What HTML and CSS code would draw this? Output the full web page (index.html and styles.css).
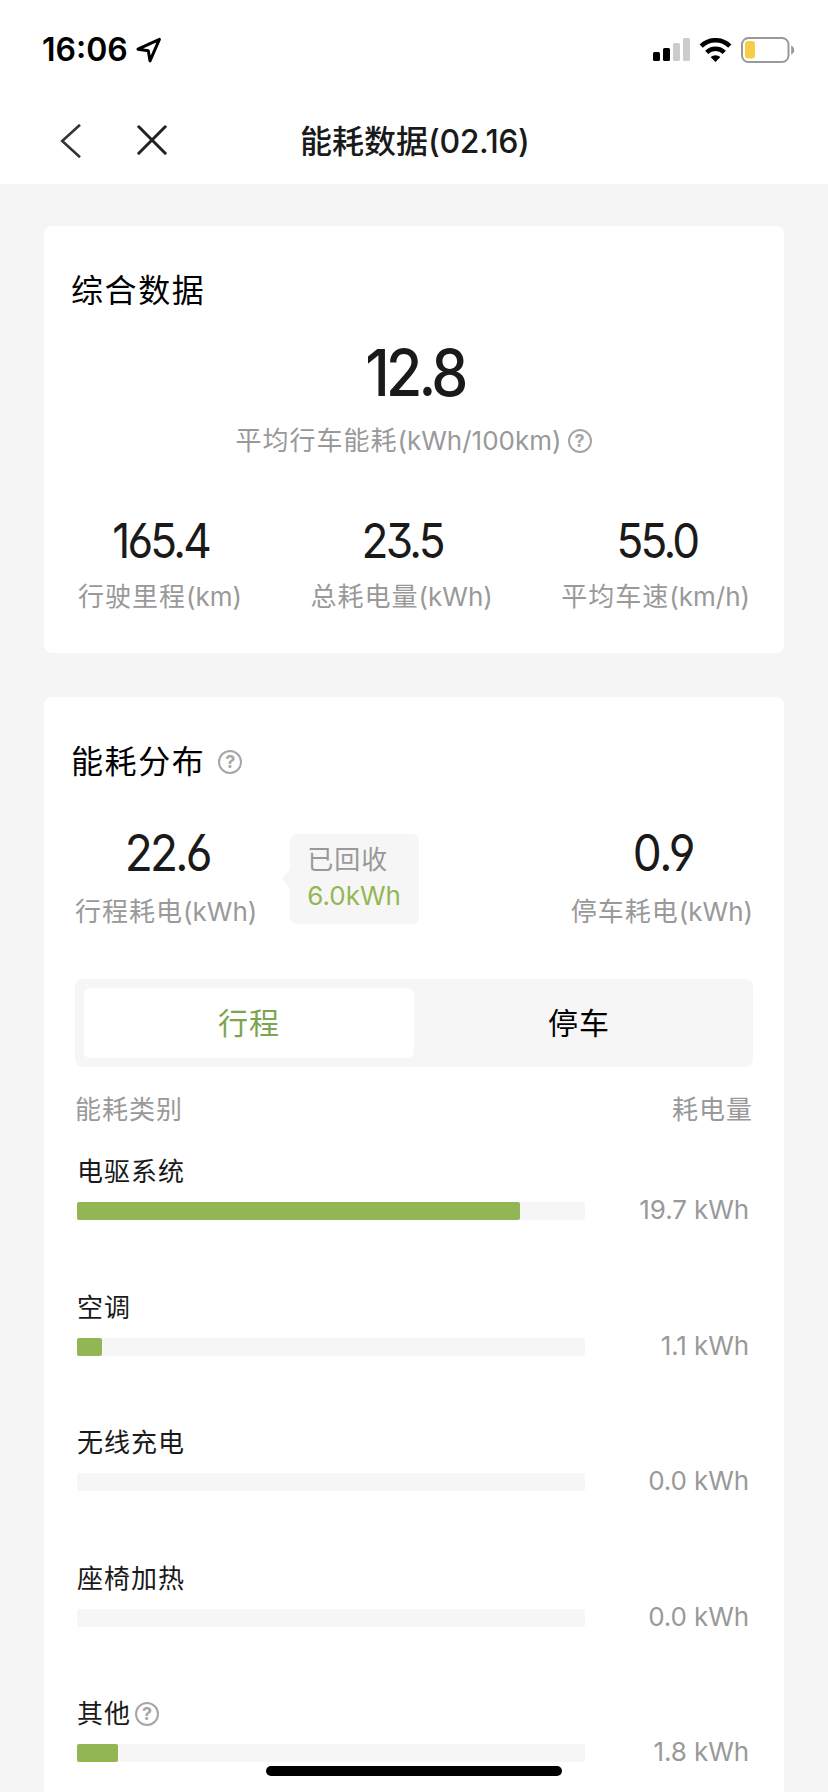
FILE: index.html
```html
<!DOCTYPE html>
<html lang="zh-CN">
<head>
<meta charset="utf-8">
<title>能耗数据</title>
<link rel="stylesheet" href="styles.css">
</head>
<body>
<div class="screen">
  <header class="top">
    <div class="status">
      <span class="time">16:06</span>
      <svg class="locate" width="26" height="26" viewBox="0 0 26 26"><path d="M2 12.2 L23.4 2.4 L14 23.8 L12.3 13.7 Z" fill="none" stroke="#000" stroke-width="3" stroke-linejoin="round"/></svg>
      <svg class="signal" width="37" height="23" viewBox="0 0 37 23"><rect y="14" width="7" height="9" rx="1.5"/><rect x="10" y="10" width="7" height="13" rx="1.5"/><rect x="20" y="5" width="7" height="18" rx="1.5" fill="#ccc"/><rect x="30" width="7" height="23" rx="1.5" fill="#ccc"/></svg>
      <svg class="wifi" width="33" height="24" viewBox="0 0 33 24"><path d="M2.2 8.1 A20.4 20.4 0 0 1 30.8 8.1" fill="none" stroke="#000" stroke-width="4.6"/><path d="M7.7 14.4 A12.3 12.3 0 0 1 25.3 14.4" fill="none" stroke="#000" stroke-width="4.4"/><path d="M16.5 24 L11.6 19 Q16.5 15.4 21.4 19 Z"/></svg>
      <svg class="battery" width="54" height="26" viewBox="0 0 54 26"><rect x="1" y="1" width="46.5" height="24" rx="6.5" fill="none" stroke="#999" stroke-width="2"/><rect x="4" y="4" width="10" height="17.5" rx="3" fill="#f5ce46"/><path d="M50.2 8.5 Q53.2 10 53.2 13 Q53.2 16 50.2 17.5Z" fill="#999"/></svg>
    </div>
    <nav class="nav">
      <svg class="back" width="22" height="34" viewBox="0 0 22 34"><path d="M20 .8 L2.2 17 L20 33.2" fill="none" stroke="#333" stroke-width="2.6"/></svg>
      <svg class="close" width="30" height="30" viewBox="0 0 30 30"><path d="M1.8 1.8 L28.2 28.2 M28.2 1.8 L1.8 28.2" fill="none" stroke="#222" stroke-width="3" stroke-linecap="round"/></svg>
      <h1 class="nav-title">能耗数据<span class="nav-date">(02.16)</span></h1>
    </nav>
  </header>

  <main class="content">
    <section class="card summary">
      <h2 class="card-title">综合数据</h2>
      <div class="hero">12.8</div>
      <div class="hero-label label">平均行车能耗<span class="latin">(kWh/100km)</span><span class="help">?</span></div>
      <div class="stats">
        <div class="stat"><div class="num">165.4</div><div class="label">行驶里程<span class="latin">(km)</span></div></div>
        <div class="stat"><div class="num">23.5</div><div class="label">总耗电量<span class="latin">(kWh)</span></div></div>
        <div class="stat"><div class="num">55.0</div><div class="label">平均车速<span class="latin">(km/h)</span></div></div>
      </div>
    </section>

    <section class="card split">
      <h2 class="card-title">能耗分布<span class="help">?</span></h2>
      <div class="usage">
        <div class="stat"><div class="num">22.6</div><div class="label">行程耗电<span class="latin">(kWh)</span></div></div>
        <div class="recovered"><div>已回收</div><div class="recovered-value">6.0kWh</div></div>
        <div class="stat parked"><div class="num">0.9</div><div class="label">停车耗电<span class="latin">(kWh)</span></div></div>
      </div>
      <div class="tabs"><div class="tab active">行程</div><div class="tab">停车</div></div>
      <div class="table-head"><span>能耗类别</span><span>耗电量</span></div>
      <div class="row"><div class="name">电驱系统</div><div class="meter"><div class="track"><div class="fill" style="width:443px"></div></div><span class="value">19.7 kWh</span></div></div>
      <div class="row"><div class="name">空调</div><div class="meter"><div class="track"><div class="fill" style="width:25px"></div></div><span class="value">1.1 kWh</span></div></div>
      <div class="row"><div class="name">无线充电</div><div class="meter"><div class="track"></div><span class="value">0.0 kWh</span></div></div>
      <div class="row"><div class="name">座椅加热</div><div class="meter"><div class="track"></div><span class="value">0.0 kWh</span></div></div>
      <div class="row"><div class="name">其他<span class="help">?</span></div><div class="meter"><div class="track"><div class="fill" style="width:41px"></div></div><span class="value">1.8 kWh</span></div></div>
    </section>
  </main>
  <div class="home-indicator"></div>
</div>
</body>
</html>
```
FILE: styles.css
```css
* { box-sizing: border-box; }
body { margin: 0; background: #f5f5f5; font-family: Inter, "Noto Sans CJK SC", sans-serif; color: #1a1a1a; }
h1, h2 { margin: 0; font-weight: 400; }
svg { display: block; flex: none; }
.screen { position: relative; width: 828px; height: 1792px; overflow: hidden; }
.top { height: 184px; background: #fff; }
.status { display: flex; align-items: center; height: 98px; padding: 1px 33px 0 42px; }
.time { font-size: 32px; font-weight: 600; line-height: 40px; width: 94px; padding-top: 1px; color: #000; white-space: nowrap; }
.locate { margin-right: auto; margin-top: 1px; }
.signal { margin-right: 9px; }
.wifi { margin-right: 9px; }
.nav { display: flex; align-items: center; height: 86px; padding-left: 60px; }
.close { margin-left: 55px; margin-bottom: 2px; }
.back { margin-bottom: 1px; }
.nav-title { margin-left: 133px; font-size: 32px; font-weight: 500; line-height: 44px; padding-top: 2px; white-space: nowrap; }
.nav-date { letter-spacing: -.4px; }
.content { padding: 42px 44px 0; }
.card { background: #fff; border-radius: 8px; }
.card-title { display: flex; align-items: center; font-size: 32px; letter-spacing: 1.6px; line-height: 48px; height: 48px; color: #000; padding-left: 27px; }
.label { font-size: 26px; letter-spacing: 1px; line-height: 36px; height: 36px; color: #999; white-space: nowrap; }
.latin { letter-spacing: 0; }
.summary { height: 427px; padding-top: 41px; }
.hero, .num { font-weight: 400; transform: translateX(1px) scaleX(.92); font-feature-settings: "cv03", "cv04", "cv09"; }
.hero { font-weight: 500; font-size: 64px; line-height: 64px; height: 64px; margin-top: 26px; text-align: center; letter-spacing: -4px; }
.hero-label { display: flex; justify-content: center; align-items: center; margin-top: 18px; padding-right: 1px; }
.help { display: inline-flex; align-items: center; justify-content: center; flex: none; width: 24px; height: 24px; border: 2.5px solid #a6a6a6; border-radius: 50%; font-size: 18px; font-weight: 700; line-height: 20px; letter-spacing: 0; color: #a6a6a6; }
.hero-label .help { margin-left: 6px; }
.card-title .help { margin-left: 13px; }
.stats { display: flex; justify-content: space-between; padding: 0 34px; margin-top: 58px; }
.stat { display: flex; flex-direction: column; align-items: center; }
.num { font-size: 48px; line-height: 48px; height: 48px; letter-spacing: -3px; }
.stats .label { margin-top: 14px; }
.split { margin-top: 44px; padding-top: 41px; height: 1120px; }
.usage { display: flex; height: 108px; margin-top: 42px; padding: 0 31px; }
.usage .num { font-size: 50px; line-height: 50px; height: 50px; }
.usage .label { margin-top: 16px; }
.usage .parked .num { letter-spacing: -1.5px; }
.recovered { position: relative; width: 129px; height: 90px; margin: 6px 0 0 33px; padding: 8px 0 0 17px; border-radius: 7px; background: #f6f6f6; font-size: 26px; line-height: 36px; letter-spacing: 1px; color: #999; white-space: nowrap; }
.recovered::before { content: ""; position: absolute; left: -8px; top: 35px; border: 10px solid transparent; border-left: 0; border-right: 8px solid #f6f6f6; }
.recovered-value { letter-spacing: 0; color: #93b655; }
.parked { margin-left: auto; }
.tabs { display: flex; width: 678px; height: 88px; margin: 43px 0 0 31px; padding: 9px; border-radius: 8px; background: #f6f6f6; }
.tab { width: 330px; height: 70px; border-radius: 6px; font-size: 30px; letter-spacing: 1px; line-height: 70px; text-align: center; color: #000; }
.active { background: #fff; color: #7ca550; }
.table-head { display: flex; justify-content: space-between; margin: 24px 31px 0; font-size: 26px; line-height: 38px; letter-spacing: 1px; color: #999; }
.row { height: 135.5px; padding: 0 35px 0 33px; }
.table-head + .row { margin-top: 25px; }
.name { display: flex; align-items: center; height: 36px; font-size: 26px; line-height: 36px; letter-spacing: 1px; }
.name .help { margin-left: 4px; }
.meter { display: flex; align-items: center; justify-content: space-between; height: 36px; margin-top: 3px; }
.track { width: 508px; height: 18px; border-radius: 2px; background: #f6f6f6; }
.fill { height: 18px; border-radius: 2px; background: #93b655; }
.value { font-size: 26px; letter-spacing: -.1px; padding-bottom: 3px; color: #999; white-space: nowrap; }
.home-indicator { position: absolute; left: 266px; top: 1766px; width: 296px; height: 10px; border-radius: 5px; background: #000; }
```
